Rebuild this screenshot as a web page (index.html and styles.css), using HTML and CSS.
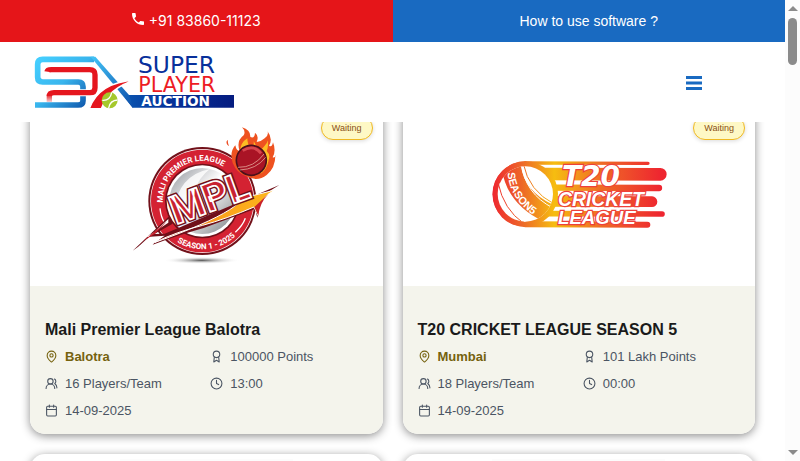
FILE: index.html
```html
<!DOCTYPE html>
<html lang="en">
<head>
<meta charset="utf-8">
<meta name="viewport" content="width=device-width, initial-scale=1">
<title>Super Player Auction</title>
<link rel="stylesheet" href="styles.css">
</head>
<body>
<svg class="sprite" aria-hidden="true">
  <symbol id="i-pin" viewBox="0 0 24 24"><path d="M20 10c0 5-5.500 10.200-7.400 11.800a1 1 0 0 1-1.200 0C9.500 20.200 4 15 4 10a8 8 0 0 1 16 0"/><circle cx="12" cy="10" r="3"/></symbol>
  <symbol id="i-users" viewBox="0 0 24 24"><path d="M18 21a8 8 0 0 0-16 0"/><circle cx="10" cy="8" r="5"/><path d="M22 20c0-3.370-2-6.500-4-8a5 5 0 0 0-.450-8.300"/></symbol>
  <symbol id="i-calendar" viewBox="0 0 24 24"><path d="M8 2v4M16 2v4M3 10h18"/><rect x="3" y="4" width="18" height="18" rx="2"/></symbol>
  <symbol id="i-award" viewBox="0 0 24 24"><circle cx="12" cy="8" r="6"/><path d="M8 13L7 22l5-3 5 3-1-9"/></symbol>
  <symbol id="i-clock" viewBox="0 0 24 24"><circle cx="12" cy="12" r="10"/><path d="M12 6v6l4 2"/></symbol>
</svg>
<div class="app">
  <div class="page">
    <header>
      <div class="topbar">
        <a class="phone" href="tel:+918386011123">
          <svg class="phone-icon" viewBox="3 3 18 18" aria-hidden="true"><path d="M6.620 10.790c1.440 2.830 3.760 5.140 6.590 6.590l2.200-2.200c.27-.27.67-.36 1.020-.24 1.120.37 2.330.57 3.570.57.55 0 1 .45 1 1V20c0 .55-.45 1-1 1C10.610 21 3 13.390 3 4c0-.55.45-1 1-1h3.500c.55 0 1 .45 1 1 0 1.250.2 2.450.57 3.570.11.35.03.74-.25 1.020z"/></svg>
          +91 83860-11123
        </a>
        <a class="help" href="#help">How to use software ?</a>
      </div>
      <div class="navbar">
        <a class="brand" href="#home" aria-label="Super Player Auction">
          <svg class="logo" viewBox="105 165 600 162">
            <defs>
              <linearGradient id="cyan" gradientUnits="userSpaceOnUse" x1="120" y1="165" x2="260" y2="320"><stop offset="0" stop-color="#45cfff"/><stop offset=".5" stop-color="#39b5ed"/><stop offset="1" stop-color="#0d54aa"/></linearGradient>
              <linearGradient id="slope" x1="0" y1="0" x2="1" y2="1"><stop offset="0" stop-color="#43c6f8"/><stop offset="1" stop-color="#0b4ca9"/></linearGradient>
              <linearGradient id="bar"><stop offset="0" stop-color="#0a55b0"/><stop offset=".4" stop-color="#06329a"/><stop offset="1" stop-color="#051c80"/></linearGradient>
              <linearGradient id="redfade" gradientUnits="userSpaceOnUse" x1="0" y1="280" x2="0" y2="303"><stop offset="0" stop-color="#e5161e"/><stop offset="1" stop-color="#e5161e" stop-opacity=".2"/></linearGradient>
            </defs>
            <path d="M282 175H128Q113 175 113 190V229Q113 243 128 243H235Q249 243 249 257V299Q249 312 234 312H105" fill="none" stroke="url(#cyan)" stroke-width="17"/>
            <path d="M387 282H702V320H398L375 290Z" fill="url(#bar)"/>
            <path d="M272 167H286L387 282L400 320H398Z" fill="url(#slope)"/>
            <path d="M141 212Q142 206 154 206H269Q285 206 285 221V260Q285 275 270 275H162Q148 275 148 285" fill="none" stroke="#fff" stroke-width="21"/>
            <path d="M141 212Q142 206 154 206H269Q285 206 285 221V260Q285 275 270 275H162Q148 275 148 285" fill="none" stroke="#e5161e" stroke-width="16"/>
            <path d="M140 280H156V303H140Z" fill="url(#redfade)"/>
            <path d="M268 323Q296 244 405 237Q326 261 304 323Z" fill="#e5161e" stroke="#fff" stroke-width="4"/>
            <circle cx="329" cy="298" r="24" fill="#a5c82c"/>
            <path d="M307 298Q330 300 335 275M326 321Q330 298 353 297" fill="none" stroke="#fff" stroke-width="4"/>
            <text class="logo-super" x="414" y="217">SUPER</text>
            <text class="logo-player" x="415" y="272">PLAYER</text>
            <text class="logo-auction" x="424" y="316">AUCTION</text>
          </svg>
        </a>
        <button class="menu" type="button" aria-label="Menu">
          <svg viewBox="0 0 16 14" aria-hidden="true"><path d="M0 0h16v3H0zM0 5.500h16v3H0zM0 11h16v3H0z"/></svg>
        </button>
      </div>
    </header>
    <main>
      <div class="cards">
        <article class="card">
          <div class="cover">
            <span class="badge">Waiting</span>
            <svg class="mpl" viewBox="30 24 456 426" role="img" aria-label="MPL">
              <defs>
                <linearGradient id="steel" x1="0" y1="0" x2="1" y2="1"><stop offset="0" stop-color="#8e9299"/><stop offset=".45" stop-color="#fff"/><stop offset="1" stop-color="#777b80"/></linearGradient>
                <linearGradient id="gold"><stop offset="0" stop-color="#ec4724"/><stop offset=".55" stop-color="#fba31b"/><stop offset="1" stop-color="#fdb71c"/></linearGradient>
                <radialGradient id="shade"><stop offset="0" stop-color="#555"/><stop offset="1" stop-color="#fff" stop-opacity="0"/></radialGradient>
                <path id="arcTop" d="M129 263A119 119 0 1 1 353 312"/>
                <path id="arcBottom" d="M145 360A144 144 0 0 0 365 342"/>
              </defs>
              <ellipse cx="245" cy="436" rx="115" ry="11" fill="url(#shade)"/>
              <circle cx="247" cy="258" r="162" fill="#711019"/>
              <circle cx="247" cy="258" r="156" fill="#fff"/>
              <circle cx="247" cy="258" r="154" fill="#d42232"/>
              <circle cx="247" cy="258" r="112" fill="#711019"/>
              <circle cx="247" cy="258" r="107" fill="#fff"/>
              <circle cx="247" cy="258" r="99" fill="url(#steel)"/>
              <path d="M160 290Q175 180 270 162Q205 210 213 330Z" fill="#fff" opacity=".8"/>
              <path d="M120 280Q123 308 134 323M346 352Q368 332 376 310" fill="none" stroke="#fff" stroke-width="4"/>
              <text class="mpl-ring"><textPath href="#arcTop">MALI PREMIER LEAGUE</textPath></text>
              <path d="M338 144Q328 110 346 91Q349 108 359 108Q348 78 371 61Q378 49 366 37Q392 44 391 66Q404 72 405 53Q418 63 410 81Q425 79 434 70Q448 59 442 48Q460 71 447 92Q456 99 459 82Q469 107 458 127Q466 130 466 119Q467 159 440 180Q413 202 378 184Q350 174 338 144Z" fill="#ee5220"/>
              <path d="M348 123Q354 121 362 123Q355 87 382 70Q382 90 392 95Q403 96 401 79Q413 96 409 109Q424 106 434 92Q445 80 442 73Q447 93 440 108Q451 119 447 131Q441 162 424 175L370 171Z" fill="#fdbd24"/>
              <path d="M323 74Q314 83 327 94Q323 83 323 74Z" fill="#ed4b22"/>
              <circle cx="394" cy="136" r="45" fill="#a91425" stroke="#4b101b" stroke-width="5"/>
              <path d="M368 107Q401 87 423 115" fill="none" stroke="#d7464f" stroke-width="8"/>
              <path d="M354 157Q402 158 432 117M359 165Q409 163 437 127" fill="none" stroke="#f2c7b3" stroke-width="2"/>
              <path d="M38 407L148 303L158 326L103 357L134 356L478 210L426 242L412 308L405 282L251 339Q180 359 98 389L111 376L84 374Z" fill="#711019"/>
              <path d="M55 395L145 312L145 323L80 366L134 362L107 382Z" fill="#fff"/>
              <path d="M70 378L141 319L105 356Z" fill="#c8212d"/>
              <path d="M105 382Q260 327 329 284Q361 264 362 251L465 225Q419 246 414 301L402 276Q318 312 248 331Q170 350 105 382Z" fill="url(#gold)" stroke="#fff" stroke-width="3"/>
              <path d="M415 302L403 276L445 237Q419 264 415 302Z" fill="#c92229"/>
              <text class="mpl-ring"><textPath href="#arcBottom" startOffset="34">SEASON 1 - 2025</textPath></text>
              <g transform="rotate(-20 176 330)">
                <text class="mpl-word mpl-back" x="168" y="326">MPL</text>
                <text class="mpl-word mpl-front" x="168" y="326">MPL</text>
              </g>
            </svg>
          </div>
          <div class="body">
            <h2>Mali Premier League Balotra</h2>
            <ul class="facts">
              <li class="place"><svg class="icon" aria-hidden="true"><use href="#i-pin"/></svg>Balotra</li>
              <li><svg class="icon" aria-hidden="true"><use href="#i-award"/></svg>100000 Points</li>
              <li><svg class="icon" aria-hidden="true"><use href="#i-users"/></svg>16 Players/Team</li>
              <li><svg class="icon" aria-hidden="true"><use href="#i-clock"/></svg>13:00</li>
              <li><svg class="icon" aria-hidden="true"><use href="#i-calendar"/></svg>14-09-2025</li>
            </ul>
          </div>
        </article>
        <article class="card">
          <div class="cover">
            <span class="badge">Waiting</span>
            <svg class="t20" viewBox="29 29 531 207" role="img" aria-label="T20 Cricket League">
              <defs>
                <linearGradient id="fire" gradientUnits="userSpaceOnUse" x1="35" y1="0" x2="540" y2="0"><stop offset="0" stop-color="#ee2630"/><stop offset=".18" stop-color="#ed6828"/><stop offset=".37" stop-color="#f6bd10"/><stop offset=".65" stop-color="#ef6b26"/><stop offset="1" stop-color="#ee2630"/></linearGradient>
                <clipPath id="ballClip"><circle cx="135" cy="131" r="83"/></clipPath>
                <path id="seam" d="M82 67Q88 153 178 206"/>
              </defs>
              <g fill="none" stroke="url(#fire)" stroke-linecap="round">
                <path d="M135 38L503 39" stroke-width="10"/>
                <path d="M190 71L540 72" stroke-width="38"/>
                <path d="M200 112L536 113" stroke-width="19"/>
                <path d="M200 153L515 154" stroke-width="32"/>
                <path d="M200 190L545 191" stroke-width="17"/>
                <path d="M135 222L501 223" stroke-width="18"/>
              </g>
              <path d="M135 33A98 98 0 0 0 135 230L190 205L220 168V92L190 56Z" fill="url(#fire)"/>
              <circle cx="135" cy="131" r="98" fill="url(#fire)"/>
              <circle cx="135" cy="131" r="83" fill="#fff"/>
              <g clip-path="url(#ballClip)" fill="none">
                <path d="M92 40Q100 141 207 190" stroke="url(#fire)" stroke-width="58"/>
                <path d="M123 40Q134 130 218 173M53 80Q65 168 137 217" stroke="#fff" stroke-width="3"/>
                <path d="M129 40Q145 122 223 162M53 97Q70 178 130 219" stroke="url(#fire)" stroke-width="3"/>
              </g>
              <text class="t20-season"><textPath href="#seam">SEASON5</textPath></text>
              <text class="t20-big" x="245" y="106">T20</text>
              <text class="t20-cricket" x="233" y="166">CRICKET</text>
              <text class="t20-league" x="233" y="221">LEAGUE</text>
            </svg>
          </div>
          <div class="body">
            <h2>T20 CRICKET LEAGUE SEASON 5</h2>
            <ul class="facts">
              <li class="place"><svg class="icon" aria-hidden="true"><use href="#i-pin"/></svg>Mumbai</li>
              <li><svg class="icon" aria-hidden="true"><use href="#i-award"/></svg>101 Lakh Points</li>
              <li><svg class="icon" aria-hidden="true"><use href="#i-users"/></svg>18 Players/Team</li>
              <li><svg class="icon" aria-hidden="true"><use href="#i-clock"/></svg>00:00</li>
              <li><svg class="icon" aria-hidden="true"><use href="#i-calendar"/></svg>14-09-2025</li>
            </ul>
          </div>
        </article>
        <article class="card"><div class="cover next"><div class="thumb"></div></div></article>
        <article class="card"><div class="cover next"><div class="thumb"></div></div></article>
      </div>
    </main>
  </div>
  <div class="scrollbar" aria-hidden="true">
    <span class="arrow up"></span>
    <span class="handle"></span>
    <span class="arrow down"></span>
  </div>
</div>
</body>
</html>
```

FILE: styles.css
```css
* { box-sizing: border-box; }

body {
  margin: 0;
  background: #fff;
  font-family: "Liberation Sans", Arial, sans-serif;
  color: #1a1a1a;
}

a { color: inherit; text-decoration: none; }

.sprite { position: absolute; width: 0; height: 0; }

.app { display: flex; height: 100vh; overflow: hidden; }

.page { flex: 1; min-width: 0; display: flex; flex-direction: column; }

.topbar {
  display: grid;
  grid-template-columns: 1fr 1fr;
  color: #fff;
  font-size: 14px;
  line-height: 18px;
}

.topbar a {
  display: flex;
  align-items: center;
  justify-content: center;
  padding: 12px;
}

.phone { background: #e51519; gap: 5px; font-family: Inter, sans-serif; }
.help { background: #196ac1; }
.phone-icon { width: 12px; height: 12px; fill: #fff; margin-bottom: 4px; }

.navbar {
  display: flex;
  align-items: center;
  justify-content: space-between;
  height: 80px;
  padding: 2px 83px 0 35px;
  background: #fff;
}

.brand, .logo { display: block; }
.logo { width: 200px; height: 54px; overflow: visible; }
.logo text { font-family: "DejaVu Sans", sans-serif; }
.logo-super { font-size: 70px; fill: #08309b; }
.logo-player { font-size: 62px; fill: #ed1c24; }
.logo-auction { font-size: 41px; font-weight: bold; fill: #fff; }

.menu { padding: 0; border: 0; background: none; color: #196ac1; }
.menu svg { display: block; width: 16px; height: 14px; fill: currentColor; }

main { flex: 1; min-height: 0; overflow: hidden; }

.cards {
  display: grid;
  grid-template-columns: 1fr 1fr;
  gap: 20px;
  margin-top: -20px;
  padding: 0 30px;
}

.card {
  border-radius: 15px;
  background: #fff;
  box-shadow: 0 2px 10px rgba(0, 0, 0, .45);
  overflow: hidden;
}

.cover {
  position: relative;
  display: flex;
  align-items: center;
  justify-content: center;
  height: 184px;
}

.badge {
  position: absolute;
  top: 14px;
  right: 10px;
  padding: 0 10px;
  border: 1px solid #f0b921;
  border-radius: 12px;
  background: #fef8c5;
  box-shadow: 0 1px 4px rgba(0, 0, 0, .15);
  color: #894f13;
  font-size: 9px;
  line-height: 22px;
}

.mpl { width: 152px; height: 142px; }
.mpl-ring { font: bold 24px Roboto, sans-serif; fill: #fff; }
.mpl-word { font: bold 118px Roboto, sans-serif; }
.mpl-back { fill: #fff; stroke: #711019; stroke-width: 14px; }
.mpl-front { fill: #c82231; stroke: #fff; stroke-width: 5px; }

.t20 { width: 177px; height: 69px; }
.t20 text { fill: #fff; font-weight: bold; }
.t20-season { font-family: "Liberation Sans", sans-serif; font-size: 32px; }
.t20-big, .t20-cricket, .t20-league {
  font-style: italic;
  stroke: #ee403b;
  stroke-width: 7px;
  paint-order: stroke;
}
.t20-big { font-family: "DejaVu Sans", sans-serif; font-size: 84px; }
.t20-cricket { font-family: "Liberation Sans", sans-serif; font-size: 58px; }
.t20-league { font-family: "Liberation Sans", sans-serif; font-size: 56px; }

.body { padding: 32px 15px 14px; background: #f4f4ec; }

h2 { margin: 0 0 5px; font-size: 16px; line-height: 24px; }

.facts {
  display: grid;
  grid-template-columns: 1fr 1fr;
  gap: 8px;
  margin: 0;
  padding: 0;
  list-style: none;
  color: #4b5563;
  font-size: 13px;
  line-height: 19px;
}

.facts li { display: flex; align-items: center; gap: 7px; }
.facts .place { color: #75620e; font-weight: bold; }

.icon {
  width: 13px;
  height: 13px;
  fill: none;
  stroke: currentColor;
  stroke-width: 2;
  stroke-linecap: round;
  stroke-linejoin: round;
}

.next { align-items: flex-start; padding-top: 5px; }
.thumb { width: 49%; height: 170px; background: #fcfcfc; }

.scrollbar {
  display: flex;
  flex-direction: column;
  align-items: center;
  width: 15px;
  padding: 6px 0;
  background: #fcfcfc;
}

.arrow { border: 5px solid transparent; }
.up { border-top: 0; border-bottom-color: #8b8b8b; }
.down { border-bottom: 0; border-top-color: #8b8b8b; margin-top: auto; }
.handle { width: 9px; height: 47px; margin-top: 7px; border-radius: 5px; background: #8b8b8b; }
```
